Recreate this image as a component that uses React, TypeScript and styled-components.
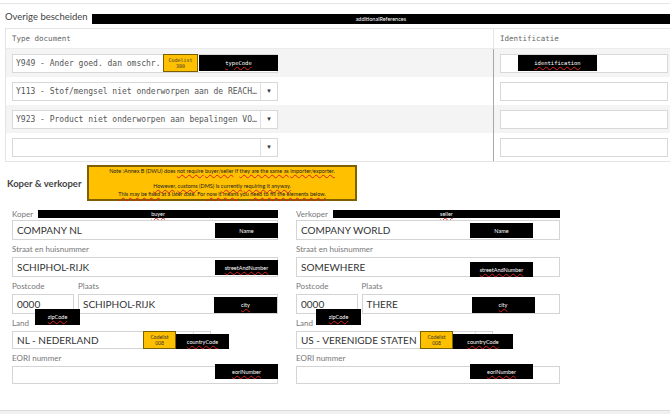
import styled, { createGlobalStyle } from 'styled-components'

const GlobalStyle = createGlobalStyle`
  html, body {
    margin: 0;
    padding: 0;
    background: #fff;
    overflow: hidden;
  }
  body {
    font-family: Lato, "Open Sans", sans-serif;
    color: #333;
  }
`

const Page = styled.div`
  width: 670px;
  height: 414px;
  display: flex;
  flex-direction: column;
  overflow: hidden;
`

const TopRule = styled.div`
  height: 3px;
  border-bottom: 1px solid #e6e6e6;
`

const SectionHead = styled.div`
  display: flex;
  align-items: flex-start;
  height: 13px;
  margin-top: 7px;
  padding-left: 5px;
  gap: 4px;
`

const SectionTitle = styled.span`
  font-size: 9.5px;
  line-height: 11px;
  color: #444;
  white-space: nowrap;
`

// black debug labels that sit on top of the form
const Tag = styled.div<{ $spell?: boolean }>`
  background: #000;
  color: #fff;
  font-size: 5.5px;
  line-height: 6px;
  display: flex;
  align-items: center;
  justify-content: center;
  white-space: nowrap;
  box-sizing: border-box;
  text-decoration: ${(p) => (p.$spell ? 'underline wavy #e02020' : 'none')};
  text-decoration-thickness: 0.5px;
  text-underline-offset: 1px;
`

const HeadBar = styled(Tag)`
  flex: 1;
  height: 10px;
  align-self: flex-end;
`

const FloatTag = styled(Tag)`
  position: absolute;
  z-index: 2;
`

const Codelist = styled.div`
  position: absolute;
  z-index: 2;
  box-sizing: border-box;
  background: #ffc000;
  border: 1px solid #7a6000;
  color: #333;
  font-size: 5px;
  line-height: 6px;
  display: flex;
  flex-direction: column;
  align-items: center;
  justify-content: center;
`

const Table = styled.div`
  margin: 4px 0 0 5px;
  width: 680px;
  border: 1px solid #e4e4e4;
  flex-shrink: 0;
`

const Row = styled.div<{ $shade?: boolean; $head?: boolean }>`
  display: grid;
  grid-template-columns: 487px 1fr;
  height: ${(p) => (p.$head ? '19px' : '28px')};
  background: ${(p) => (p.$shade ? '#f4f4f4' : '#fff')};
  border-bottom: ${(p) => (p.$head ? '1px solid #ececec' : 'none')};
`

const Cell = styled.div<{ $divider?: 'light' | 'dark' }>`
  display: flex;
  align-items: center;
  padding: 0 6px;
  border-left: ${(p) =>
    p.$divider === 'dark' ? '1px solid #a8a8a8' : p.$divider === 'light' ? '1px solid #e6e6e6' : 'none'};
`

const HeadText = styled.span`
  font-family: "DejaVu Sans Mono", monospace;
  font-size: 7.5px;
  color: #666;
`

const MonoField = styled.div<{ $w: number }>`
  position: relative;
  box-sizing: border-box;
  width: ${(p) => p.$w}px;
  height: 19px;
  background: #fff;
  border: 1px solid #d8d8d8;
  display: flex;
  align-items: center;
  font-family: "DejaVu Sans Mono", monospace;
  font-size: 8px;
  color: #555;
`

const MonoText = styled.span`
  flex: 1;
  padding-left: 3px;
  white-space: nowrap;
  overflow: hidden;
`

const Arrow = styled.span`
  width: 16px;
  align-self: stretch;
  border-left: 1px solid #e0e0e0;
  display: flex;
  align-items: center;
  justify-content: center;
  font-size: 7px;
  color: #333;
  font-family: "DejaVu Sans", sans-serif;
`

const KvHead = styled.div`
  display: flex;
  align-items: center;
  margin-top: 3px;
`

const KvTitle = styled.div`
  width: 87px;
  flex-shrink: 0;
  box-sizing: border-box;
  padding-left: 7px;
  font-size: 9.5px;
  font-weight: 700;
  color: #444;
  white-space: nowrap;
`

const Note = styled.div`
  width: 270px;
  height: 36px;
  box-sizing: border-box;
  background: #ffc000;
  border: 2px solid #7f6000;
  padding-top: 1px;
  font-size: 5.5px;
  line-height: 7.5px;
  color: #222;
  text-align: center;
  white-space: nowrap;
`

const Spell = styled.span`
  text-decoration: underline wavy #e02020;
  text-decoration-thickness: 0.5px;
  text-underline-offset: 1px;
`

const PartyGrid = styled.div`
  display: grid;
  grid-template-columns: 266px 264px;
  column-gap: 18px;
  padding-left: 12px;
  margin-top: 6px;
`

const Party = styled.div`
  display: flex;
  flex-direction: column;
`

const PartyHead = styled.div`
  display: flex;
  align-items: center;
  gap: 5px;
  height: 13px;
`

const Label = styled.div`
  font-size: 8px;
  line-height: 10px;
  color: #777;
  white-space: nowrap;
`

const LabelBlock = styled(Label)`
  height: 17px;
  display: flex;
  align-items: flex-end;
  box-sizing: border-box;
  padding-bottom: 3px;
`

const PartyBar = styled(Tag)`
  width: 247px;
  height: 8px;
`

const Field = styled.div<{ $h?: number; $w?: number }>`
  position: relative;
  box-sizing: border-box;
  width: ${(p) => (p.$w ? `${p.$w}px` : '100%')};
  height: ${(p) => p.$h ?? 20}px;
  border: 1px solid #d4d4d4;
  background: #fff;
  display: flex;
  align-items: center;
  font-size: 10px;
  color: #333;
`

const FieldText = styled.span`
  flex: 1;
  padding-left: 4px;
  white-space: nowrap;
`

const SelectEdge = styled.span`
  width: 16px;
  align-self: stretch;
  border-left: 1px solid #e0e0e0;
`

const Split = styled.div`
  display: grid;
  grid-template-columns: 23.3% 1fr;
  column-gap: 4px;
`

const Footer = styled.div`
  margin-top: auto;
  height: 3px;
  border-top: 1px solid #dcdcdc;
  background: #f0f0f0;
`

interface PartyProps {
  title: string
  tag: string
  name: string
  street: string
  zip: string
  city: string
  country: string
  tagLeft: number
  zipLeft: number
  landW: number
  codeLeft: number
  countryW: number
  streetTop: number
}

function PartyForm(p: PartyProps) {
  return (
    <Party>
      <PartyHead>
        <Label>{p.title}</Label>
        <PartyBar $spell>{p.tag}</PartyBar>
      </PartyHead>
      <Field>
        <FieldText>{p.name}</FieldText>
        <FloatTag style={{ left: p.tagLeft, top: 2, width: 63, height: 15 }}>Name</FloatTag>
      </Field>
      <LabelBlock>Straat en huisnummer</LabelBlock>
      <Field>
        <FieldText>{p.street}</FieldText>
        <FloatTag $spell style={{ left: p.tagLeft, top: p.streetTop, width: 63, height: 15 }}>
          streetAndNumber
        </FloatTag>
      </Field>
      <Split>
        <LabelBlock>Postcode</LabelBlock>
        <LabelBlock>Plaats</LabelBlock>
        <Field>
          <FieldText>{p.zip}</FieldText>
          <FloatTag $spell style={{ left: p.zipLeft, top: 14, width: 45, height: 16 }}>
            zipCode
          </FloatTag>
        </Field>
        <Field>
          <FieldText>{p.city}</FieldText>
          <FloatTag $spell style={{ left: p.tagLeft - 67 - (p.zipLeft === 22 ? 0 : -3), top: 2, width: 63, height: 16 }}>
            city
          </FloatTag>
        </Field>
      </Split>
      <LabelBlock>Land</LabelBlock>
      <Field $h={18} $w={p.landW}>
        <FieldText>{p.country}</FieldText>
        <SelectEdge />
        <Codelist style={{ left: p.codeLeft, top: -1, width: 33, height: 18 }}>
          <span>Codelist</span>
          <span>008</span>
        </Codelist>
        <FloatTag $spell style={{ left: p.codeLeft + 33, top: 2, width: p.countryW, height: 15 }}>
          countryCode
        </FloatTag>
      </Field>
      <LabelBlock>EORI nummer</LabelBlock>
      <Field $h={18}>
        <FloatTag $spell style={{ left: p.tagLeft, top: -3, width: 63, height: 15 }}>
          eoriNumber
        </FloatTag>
      </Field>
    </Party>
  )
}

const docs = [
  'Y113 - Stof/mengsel niet onderworpen aan de REACH…',
  'Y923 - Product niet onderworpen aan bepalingen VO…',
  '',
]

export default function App() {
  return (
    <Page>
      <GlobalStyle />
      <TopRule />
      <SectionHead>
        <SectionTitle>Overige bescheiden</SectionTitle>
        <HeadBar>additionalReferences</HeadBar>
      </SectionHead>

      <Table>
        <Row $head>
          <Cell>
            <HeadText>Type document</HeadText>
          </Cell>
          <Cell $divider="light">
            <HeadText>Identificatie</HeadText>
          </Cell>
        </Row>
        <Row $shade>
          <Cell>
            <MonoField $w={266}>
              <MonoText>Y949 - Ander goed. dan omschr.</MonoText>
              <Codelist style={{ left: 150, top: -1, width: 35, height: 18 }}>
                <span>Codelist</span>
                <span>380</span>
              </Codelist>
              <FloatTag $spell style={{ left: 186, top: 0, width: 79, height: 16 }}>
                typeCode
              </FloatTag>
            </MonoField>
          </Cell>
          <Cell $divider="dark">
            <MonoField $w={168}>
              <FloatTag $spell style={{ left: 17, top: 0, width: 79, height: 16 }}>
                identification
              </FloatTag>
            </MonoField>
          </Cell>
        </Row>
        {docs.map((d, i) => (
          <Row key={i} $shade={i % 2 === 1}>
            <Cell>
              <MonoField $w={266}>
                <MonoText>{d}</MonoText>
                <Arrow>▾</Arrow>
              </MonoField>
            </Cell>
            <Cell $divider="dark">
              <MonoField $w={168} />
            </Cell>
          </Row>
        ))}
      </Table>

      <KvHead>
        <KvTitle>Koper &amp; verkoper</KvTitle>
        <Note>
          <div>
            Note :Annex B (DWU) does <Spell>not require</Spell> <Spell>buyer/seller</Spell> if{' '}
            <Spell>they are the same as</Spell> <Spell>importer/exporter.</Spell>
          </div>
          <div>&nbsp;</div>
          <div>
            <Spell>However</Spell>, <Spell>customs</Spell> (DMS) is <Spell>currently</Spell>{' '}
            <Spell>requiring it anyway.</Spell>
          </div>
          <div>
            <Spell>This may be fixed</Spell> at a later date. For <Spell>now it means</Spell> you{' '}
            <Spell>need to fill the elements below.</Spell>
          </div>
        </Note>
      </KvHead>

      <PartyGrid>
        <PartyForm
          title="Koper"
          tag="buyer"
          name="COMPANY NL"
          street="SCHIPHOL-RIJK"
          zip="0000"
          city="SCHIPHOL-RIJK"
          country="NL - NEDERLAND"
          tagLeft={202}
          zipLeft={22}
          landW={199}
          codeLeft={130}
          countryW={53}
          streetTop={2}
        />
        <PartyForm
          title="Verkoper"
          tag="seller"
          name="COMPANY WORLD"
          street="SOMEWHERE"
          zip="0000"
          city="THERE"
          country="US - VERENIGDE STATEN"
          tagLeft={173}
          zipLeft={19}
          landW={197}
          codeLeft={123}
          countryW={60}
          streetTop={4}
        />
      </PartyGrid>

      <Footer />
    </Page>
  )
}
